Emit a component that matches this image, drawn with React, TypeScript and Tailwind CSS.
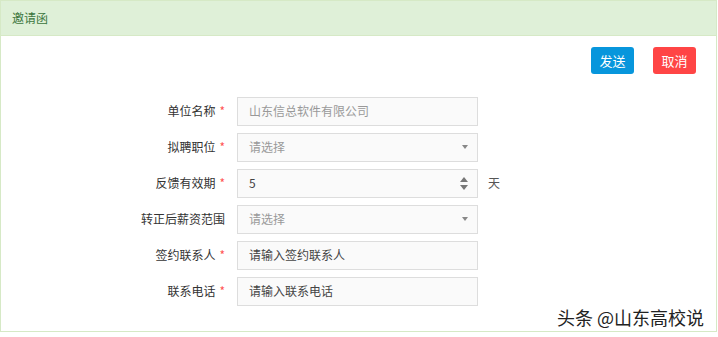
import React from "react"

const font = { fontFamily: '"Noto Sans CJK SC", "Noto Sans", sans-serif' }

type Row = { label: string; req: boolean; kind: "text" | "select" | "number"; value?: string; placeholder?: string; suffix?: string; dim?: boolean }

const rows: Row[] = [
  { label: "单位名称", req: true, kind: "text", placeholder: "山东信总软件有限公司", dim: true },
  { label: "拟聘职位", req: true, kind: "select", placeholder: "请选择", dim: true },
  { label: "反馈有效期", req: true, kind: "number", value: "5", suffix: "天" },
  { label: "转正后薪资范围", req: false, kind: "select", placeholder: "请选择", dim: true },
  { label: "签约联系人", req: true, kind: "text", placeholder: "请输入签约联系人" },
  { label: "联系电话", req: true, kind: "text", placeholder: "请输入联系电话" },
]

function Caret() {
  return <span className="w-0 h-0 border-l-[3.5px] border-r-[3.5px] border-t-[4px] border-l-transparent border-r-transparent border-t-[#888]" />
}

function Spinner() {
  return (
    <span className="flex flex-col items-center gap-[3px]">
      <span className="w-0 h-0 border-l-[4px] border-r-[4px] border-b-[5px] border-l-transparent border-r-transparent border-b-[#777]" />
      <span className="w-0 h-0 border-l-[4px] border-r-[4px] border-t-[5px] border-l-transparent border-r-transparent border-t-[#777]" />
    </span>
  )
}

export default function App() {
  return (
    <div className="w-[718px] h-[337px] bg-white relative" style={font}>
      <div className="w-[717px] h-[332px] border border-[#d6e9c6] flex flex-col">
        <div className="h-[35px] px-[11px] bg-[#dff0d8] border-b border-[#d6e9c6] flex items-center text-[12px] text-[#3c763d]">邀请函</div>
        <div className="flex justify-end gap-[19px] pr-[20px] pt-[11px]">
          <button className="w-[43px] h-[27px] rounded-[3px] bg-[#0796dc] text-white text-[13px]">发送</button>
          <button className="w-[43px] h-[27px] rounded-[3px] bg-[#ff4545] text-white text-[13px]">取消</button>
        </div>
        <div className="flex flex-col gap-[8px] pt-[23px]">
          {rows.map((r) => (
            <div key={r.label} className="flex items-center h-[28px]">
              <div className="w-[224px] text-right text-[12px] text-[#333]">
                {r.label}
                {r.req && <span className="text-[#f55] ml-[4px]">*</span>}
              </div>
              <div className="ml-[12px] w-[241px] h-[29px] border border-[#ddd] bg-[#fafafa] flex items-center pl-[11px] pr-[9px] text-[12px]">
                <span className={`flex-1 ${r.dim ? "text-[#999]" : "text-[#444]"}`}>{r.value ?? r.placeholder}</span>
                {r.kind === "select" && <Caret />}
                {r.kind === "number" && <Spinner />}
              </div>
              {r.suffix && <span className="ml-[10px] text-[12px] text-[#555]">{r.suffix}</span>}
            </div>
          ))}
        </div>
      </div>
      <div className="absolute left-[557px] top-[304px] text-[18px] text-[#222]">头条 @山东高校说</div>
    </div>
  )
}
